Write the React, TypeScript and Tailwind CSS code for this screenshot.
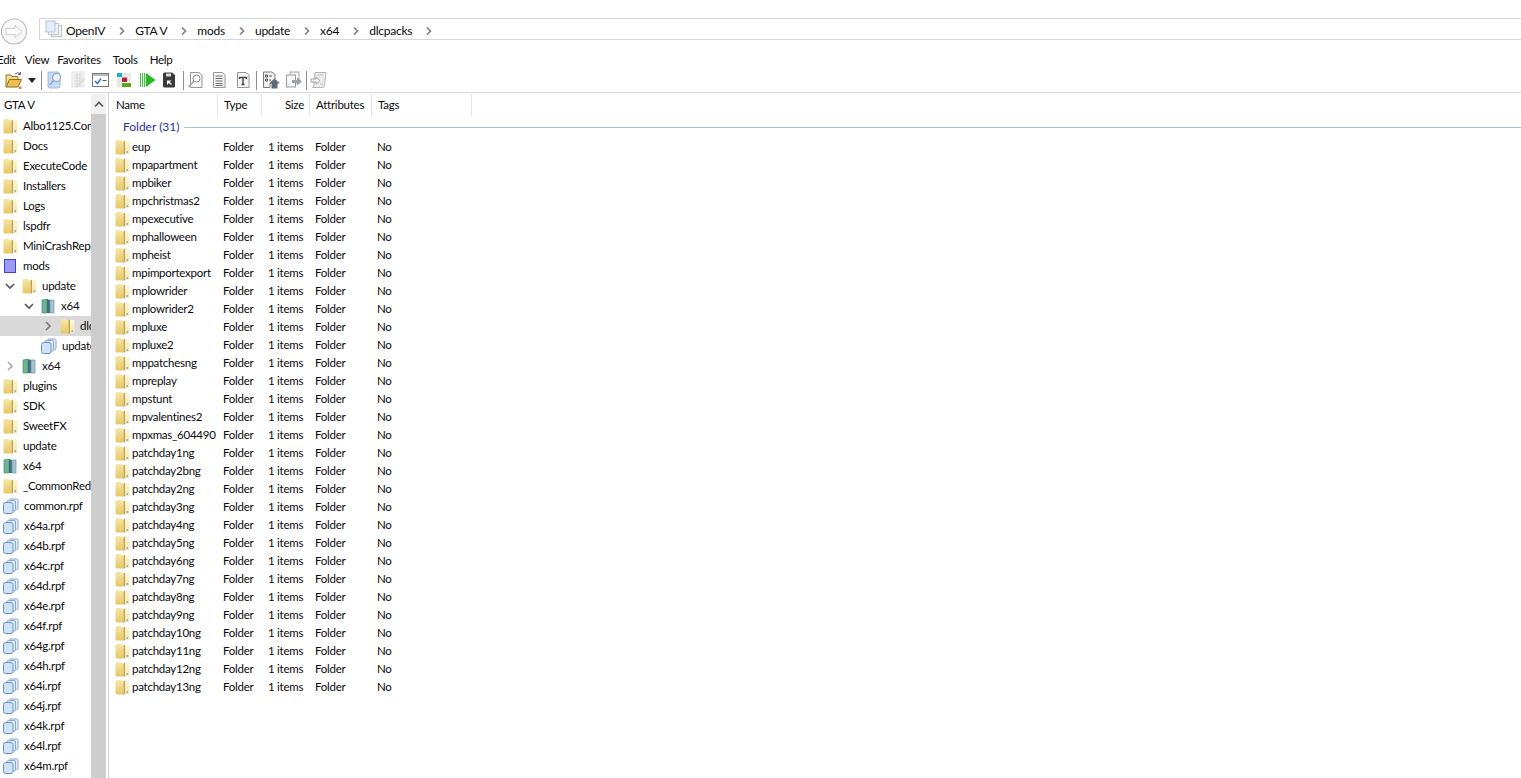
const FOLDERS = [
  "eup", "mpapartment", "mpbiker", "mpchristmas2", "mpexecutive", "mphalloween", "mpheist", "mpimportexport",
  "mplowrider", "mplowrider2", "mpluxe", "mpluxe2", "mppatchesng", "mpreplay", "mpstunt", "mpvalentines2",
  "mpxmas_604490", "patchday1ng", "patchday2bng", "patchday2ng", "patchday3ng", "patchday4ng", "patchday5ng",
  "patchday6ng", "patchday7ng", "patchday8ng", "patchday9ng", "patchday10ng", "patchday11ng", "patchday12ng",
  "patchday13ng",
];

type Kind = "folder" | "mods" | "pack" | "rpf";
type TreeRow = { label: string; kind: Kind; level?: 0 | 1 | 2 | 3; arrow?: "open" | "closed"; selected?: boolean };

const TREE: TreeRow[] = [
  { label: "Albo1125.Common", kind: "folder" },
  { label: "Docs", kind: "folder" },
  { label: "ExecuteCode", kind: "folder" },
  { label: "Installers", kind: "folder" },
  { label: "Logs", kind: "folder" },
  { label: "lspdfr", kind: "folder" },
  { label: "MiniCrashReports", kind: "folder" },
  { label: "mods", kind: "mods" },
  { label: "update", kind: "folder", level: 1, arrow: "open" },
  { label: "x64", kind: "pack", level: 2, arrow: "open" },
  { label: "dlcpacks", kind: "folder", level: 3, arrow: "closed", selected: true },
  { label: "update.rpf", kind: "rpf", level: 2 },
  { label: "x64", kind: "pack", level: 1, arrow: "closed" },
  { label: "plugins", kind: "folder" },
  { label: "SDK", kind: "folder" },
  { label: "SweetFX", kind: "folder" },
  { label: "update", kind: "folder" },
  { label: "x64", kind: "pack" },
  { label: "_CommonRedist", kind: "folder" },
  { label: "common.rpf", kind: "rpf" },
  { label: "x64a.rpf", kind: "rpf" },
  { label: "x64b.rpf", kind: "rpf" },
  { label: "x64c.rpf", kind: "rpf" },
  { label: "x64d.rpf", kind: "rpf" },
  { label: "x64e.rpf", kind: "rpf" },
  { label: "x64f.rpf", kind: "rpf" },
  { label: "x64g.rpf", kind: "rpf" },
  { label: "x64h.rpf", kind: "rpf" },
  { label: "x64i.rpf", kind: "rpf" },
  { label: "x64j.rpf", kind: "rpf" },
  { label: "x64k.rpf", kind: "rpf" },
  { label: "x64l.rpf", kind: "rpf" },
  { label: "x64m.rpf", kind: "rpf" },
];

const INDENT = { 0: "pl-[3px]", 1: "pl-[22px]", 2: "pl-[41px]", 3: "pl-[60px]" };
const CRUMBS = ["OpenIV", "GTA V", "mods", "update", "x64", "dlcpacks"];

function FolderIcon() {
  return (
    <svg width="15" height="16" viewBox="0 0 15 16" className="shrink-0">
      <defs>
        <linearGradient id="fl" x1="0" y1="0" x2="0" y2="1">
          <stop offset="0" stopColor="#f6e6a4" />
          <stop offset="1" stopColor="#e6c766" />
        </linearGradient>
        <linearGradient id="fr" x1="0" y1="0" x2="0" y2="1">
          <stop offset="0" stopColor="#fdf7d8" />
          <stop offset="1" stopColor="#f6e5a6" />
        </linearGradient>
      </defs>
      <path d="M.5 2.5 Q.5 1 2 1 L5 1 L8.5 2.5 L8.5 15.5 L2 15.5 Q.5 15.5 .5 14 Z" fill="url(#fl)" />
      <path d="M8.5 2.5 L10 1.5 L10 15.5 L8.5 15.5 Z" fill="#c4a24a" />
      <path d="M10 2 L13.5 2 Q14.5 2 14.5 3.5 L14.5 13.5 Q14.5 15 13 15 L10 15 Z" fill="url(#fr)" />
      <rect x="11.5" y="12" width="1.5" height="2" fill="#8ab8d8" />
    </svg>
  );
}

function ModsIcon() {
  return (
    <svg width="15" height="16" viewBox="0 0 15 16" className="shrink-0">
      <rect x="1.5" y="1.5" width="11" height="13" fill="#9b9bf2" stroke="#4040e0" />
    </svg>
  );
}

function PackIcon() {
  return (
    <svg width="15" height="16" viewBox="0 0 15 16" className="shrink-0">
      <path d="M1 2 L6 1 L6 15 L1 15 Z" fill="#6db595" stroke="#4a8d78" strokeWidth=".7" />
      <path d="M6 1 L9 2 L9 15 L6 15 Z" fill="#3f6e78" />
      <path d="M9 2 L13 2 L13 15 L9 15 Z" fill="#a3c2d2" stroke="#6f95a8" strokeWidth=".7" />
    </svg>
  );
}

function RpfIcon() {
  return (
    <svg width="16" height="16" viewBox="0 0 16 16" className="shrink-0">
      <rect x="6.5" y="1" width="8.5" height="10.5" rx="1.5" fill="#e6f0fb" stroke="#7fa5d6" />
      <rect x="4" y="2.5" width="8.5" height="10.5" rx="1.5" fill="#e6f0fb" stroke="#7fa5d6" />
      <rect x=".5" y="4.5" width="9.5" height="11" rx="2" fill="#cfe2f8" stroke="#5f90cc" />
    </svg>
  );
}

function RowIcon({ kind }: { kind: Kind }) {
  if (kind === "mods") return <ModsIcon />;
  if (kind === "pack") return <PackIcon />;
  if (kind === "rpf") return <RpfIcon />;
  return <FolderIcon />;
}

function Chevron({ open, light }: { open?: boolean; light?: boolean }) {
  const color = light ? "#a6a6a6" : "#7b7b7b";
  return (
    <svg width="10" height="10" viewBox="0 0 10 10">
      {open ? (
        <path d="M1 3 L5 7 L9 3" fill="none" stroke="#555" strokeWidth="1.6" />
      ) : (
        <path d="M3 1 L7 5 L3 9" fill="none" stroke={color} strokeWidth="1.6" />
      )}
    </svg>
  );
}

function BackButton() {
  return (
    <svg width="28" height="28" viewBox="0 0 28 28" className="shrink-0">
      <circle cx="14" cy="13.5" r="12.5" fill="#f8f8f8" stroke="#bdbdbd" strokeWidth="1.2" />
      <path d="M22 13.5 L15 7.5 L15 10.5 L6 10.5 L6 16.5 L15 16.5 L15 19.5 Z" fill="#fff" stroke="#c8c8c8" />
    </svg>
  );
}

function CrumbIcon() {
  return (
    <svg width="18" height="18" viewBox="0 0 18 18" className="shrink-0">
      <rect x="6.5" y="5.5" width="10" height="11" fill="#f5f5f5" stroke="#c0c0c0" />
      <rect x="3.5" y="3.5" width="10" height="11" fill="#f0f4f9" stroke="#bcc4cf" />
      <rect x="1" y="1" width="9" height="11" fill="#e4eefa" stroke="#b0c4dc" />
    </svg>
  );
}

/* toolbar drawings, 18x18 */
const OpenIcon = () => (
  <svg width="18" height="18" viewBox="0 0 18 18">
    <path d="M1 4 L6 4 L7 5.5 L13 5.5 L13 9 L1 16 Z" fill="#f4d98a" stroke="#9a7a2a" />
    <path d="M1 16 L4.5 8.5 L16.5 8.5 L13 16 Z" fill="#efc052" stroke="#8f6c20" />
    <path d="M10 3 Q13 .5 15.5 3 M15.5 1 L15.5 3.5 L13 3.5" fill="none" stroke="#556070" strokeWidth="1" />
    <rect x="14" y="15.5" width="2.5" height="2.5" fill="#f08020" />
  </svg>
);
const SearchBlueIcon = () => (
  <svg width="18" height="18" viewBox="0 0 18 18">
    <path d="M2 2 Q2 1 3 1 L12 1 L14 3 L14 15 Q14 17 12 17 L4 17 Q2 17 2 15 Z" fill="#c8daf3" stroke="#9ab8de" />
    <circle cx="10.5" cy="6.5" r="4" fill="#eef4fc" stroke="#8da6c6" strokeWidth="1.2" />
    <path d="M7.5 9.5 L3.5 14" stroke="#8da6c6" strokeWidth="1.8" />
  </svg>
);
const FadedDocIcon = () => (
  <svg width="18" height="18" viewBox="0 0 18 18">
    <rect x="3" y="1" width="12" height="15" fill="#f2f2f2" stroke="#e4e4e4" />
    <path d="M5 4h8M5 7h8M5 10h8M5 13h5M8 2v14M11 2v14" stroke="#d8d8d8" />
    <path d="M7 16 L15 8" stroke="#dcdcdc" strokeWidth="2" />
  </svg>
);
const CheckWindowIcon = () => (
  <svg width="18" height="18" viewBox="0 0 18 18">
    <rect x=".5" y="2.5" width="16" height="13" fill="#fff" stroke="#777" />
    <rect x="1" y="3" width="15" height="2" fill="#b8b8b8" />
    <path d="M3 10 L5.5 12.5 L9 7.5" fill="none" stroke="#2f74d0" strokeWidth="1.5" />
    <path d="M10.5 9.5h4" stroke="#555" />
  </svg>
);
const BlocksIcon = () => (
  <svg width="16" height="16" viewBox="0 0 16 16">
    <rect x="1" y="1" width="5" height="4" fill="#10b0d8" />
    <rect x="6" y="1" width="9" height="4" fill="#e8e8e8" />
    <rect x="1" y="5" width="5" height="5" fill="#e8e8e8" />
    <rect x="6" y="5.5" width="5" height="4.5" fill="#c01838" />
    <rect x="11" y="5.5" width="4" height="4.5" fill="#e8e8e8" />
    <rect x="1" y="10" width="5" height="5" fill="#e8e8e8" />
    <rect x="6" y="11" width="9" height="4" fill="#58a818" />
  </svg>
);
const RunIcon = () => (
  <svg width="16" height="16" viewBox="0 0 16 16">
    <path d="M.5 1v14M2.5 1v14M4.5 1v14" stroke="#3cc83c" />
    <path d="M6 1 L15.5 8 L6 15 Z" fill="#25b825" />
  </svg>
);
const SaveDarkIcon = () => (
  <svg width="14" height="16" viewBox="0 0 14 16">
    <path d="M1 2 Q1 .5 2.5 .5 L10 .5 L13 3 L13 14 Q13 15.5 11.5 15.5 L2.5 15.5 Q1 15.5 1 14 Z" fill="#3a3a3a" />
    <rect x="4" y="1.5" width="5" height="3" fill="#d8d8d8" />
    <path d="M5 13 L5 8.5 L9.5 8.5 L7.8 10 L10 12 L9 13 L7 11 Z" fill="#fff" />
  </svg>
);
const DocFrame = ({ children }: { children?: React.ReactNode }) => (
  <svg width="18" height="18" viewBox="0 0 18 18">
    <path d="M3.5 1.5 L12 1.5 L15 4 L15 16.5 L3.5 16.5 Z" fill="#f6f6f6" stroke="#969696" />
    {children}
  </svg>
);
const ZoomDocIcon = () => (
  <DocFrame>
    <circle cx="9.5" cy="7.5" r="3.5" fill="#fff" stroke="#8a8a8a" />
    <path d="M7 10 L1.5 16" stroke="#a4a4a4" strokeWidth="1.6" />
  </DocFrame>
);
const TextDocIcon = () => (
  <DocFrame>
    <path d="M5.5 5h7M5.5 7.5h7M5.5 10h7M5.5 12.5h7M5.5 14.5h7" stroke="#6a6a6a" />
  </DocFrame>
);
const TypeDocIcon = () => (
  <DocFrame>
    <path d="M5.5 8 L5.5 6.5 L12.5 6.5 L12.5 8 M9 6.5 L9 13.5 M7.5 13.5 L10.5 13.5" fill="none" stroke="#444" strokeWidth="1.4" />
  </DocFrame>
);
const ImportIcon = () => (
  <svg width="18" height="18" viewBox="0 0 18 18">
    <path d="M1.5 1 L10 1 L13 3.5 L13 8 L8 13 L8 16.5 L1.5 16.5 Z" fill="#f0f0f0" stroke="#7a7a7a" />
    <path d="M3.5 4h2v2h-2zM3.5 8h2v2h-2zM7 5h3M7 9h2" stroke="#555" fill="none" />
    <path d="M12.5 7.5 L18 12.5 L15.5 12.5 L15.5 17.5 L9.5 17.5 L9.5 12.5 L7 12.5 Z" fill="#5d6b78" />
  </svg>
);
const ExportIcon = () => (
  <svg width="18" height="18" viewBox="0 0 18 18">
    <rect x="5" y="1" width="9" height="11" fill="#f6f6f6" stroke="#a8a8a8" />
    <rect x="1.5" y="4" width="9" height="12" fill="#f6f6f6" stroke="#9a9a9a" />
    <path d="M7 9h5V6.5L17 10.5 12 14.5V12H7Z" fill="#9aa2aa" />
  </svg>
);
const ScriptIcon = () => (
  <svg width="18" height="18" viewBox="0 0 18 18">
    <path d="M5 1.5 L16 1.5 L14.5 14 Q14 16.5 12 16.5 L2.5 16.5 Q4 15.5 4 13 Z" fill="#ececec" stroke="#b4b4b4" />
    <path d="M1 8h5V6l4 3.5L6 13v-2H1Z" fill="#f6f6f6" stroke="#a4a4a4" />
    <path d="M8 4h5M10 13h3" stroke="#bcbcbc" />
  </svg>
);

function Sep({ className }: { className: string }) {
  return <div className={`h-[19px] w-px bg-[#8e8e8e] shrink-0 ${className}`} />;
}

function Tool({ className, children }: { className: string; children: React.ReactNode }) {
  return <div className={`flex h-[18px] items-center justify-center shrink-0 ${className}`}>{children}</div>;
}

export default function App() {
  return (
    <div className="h-[778px] w-[1521px] overflow-hidden bg-white text-[11.5px] tracking-[-0.25px] leading-[16px] text-[#0a0a0a] flex flex-col font-['Lato','Noto_Sans',sans-serif]">
      {/* address bar */}
      <div className="flex items-start h-[46px] pt-[18px] shrink-0">
        <div className="w-[39px] shrink-0"><BackButton /></div>
        <div className="flex-1 h-[22px] border border-r-0 border-[#d6d6d6] flex items-center pl-[5px]">
          <CrumbIcon />
          <div className="flex items-center ml-[3px] pt-[3px]">
            {CRUMBS.map((c) => (
              <div key={c} className="flex items-center">
                <span className="text-[12px]">{c}</span>
                <svg width="6" height="8" viewBox="0 0 6 8" className="ml-[14px] mr-[10px]">
                  <path d="M1 .5 L4.5 4 L1 7.5" fill="none" stroke="#808080" strokeWidth="1.6" />
                </svg>
              </div>
            ))}
          </div>
        </div>
      </div>

      {/* menu */}
      <div className="flex h-[23px] items-end shrink-0 -ml-[3px] pb-[1px]">
        <span className="mr-[9px]">Edit</span>
        <span className="mr-[8px]">View</span>
        <span className="mr-[12px]">Favorites</span>
        <span className="mr-[12px]">Tools</span>
        <span>Help</span>
      </div>

      {/* toolbar */}
      <div className="flex h-[24px] items-center shrink-0 border-b border-[#d9d9d9] pl-[5px] pb-[1px]">
        <Tool className="w-[18px]"><OpenIcon /></Tool>
        <svg width="8" height="5" viewBox="0 0 8 5" className="ml-[5px]"><path d="M0 0 H8 L4 5 Z" fill="#222" /></svg>
        <Sep className="ml-[5px]" />
        <Tool className="ml-[4px] w-[18px]"><SearchBlueIcon /></Tool>
        <Tool className="ml-[5px] w-[18px]"><FadedDocIcon /></Tool>
        <Tool className="ml-[5px] w-[18px]"><CheckWindowIcon /></Tool>
        <Tool className="ml-[6px] w-[16px]"><BlocksIcon /></Tool>
        <Tool className="ml-[8px] w-[16px]"><RunIcon /></Tool>
        <Tool className="ml-[6px] w-[14px]"><SaveDarkIcon /></Tool>
        <Sep className="ml-[7px]" />
        <Tool className="ml-[3px] w-[18px]"><ZoomDocIcon /></Tool>
        <Tool className="ml-[5px] w-[18px]"><TextDocIcon /></Tool>
        <Tool className="ml-[6px] w-[18px]"><TypeDocIcon /></Tool>
        <Sep className="ml-[4px]" />
        <Tool className="ml-[5px] w-[18px]"><ImportIcon /></Tool>
        <Tool className="ml-[5px] w-[18px]"><ExportIcon /></Tool>
        <Sep className="ml-[3px]" />
        <Tool className="ml-[3px] w-[18px]"><ScriptIcon /></Tool>
      </div>

      <div className="flex flex-1 min-h-0">
        {/* tree */}
        <div className="w-[109px] shrink-0 flex border-r border-[#d0d0d0]">
          <div className="w-[91px] shrink-0 overflow-hidden">
            <div className="h-[23px] pl-[4px] pt-[1px] flex items-center">GTA V</div>
            {TREE.map((row, i) => (
              <div
                key={i}
                className={`h-[20px] flex items-center whitespace-nowrap ${INDENT[row.level ?? 0]} ${row.selected ? "bg-[#d9d9d9]" : ""}`}
              >
                {row.arrow && (
                  <span className="-ml-[17px] w-[17px] shrink-0 flex">
                    <Chevron open={row.arrow === "open"} light={!row.selected} />
                  </span>
                )}
                <RowIcon kind={row.kind} />
                <span className="ml-[5px]">{row.label}</span>
              </div>
            ))}
          </div>
          <div className="w-[15px] shrink-0 bg-[#cdcdcd] mt-[1px]">
            <div className="h-[20px] bg-[#f0f0f0] flex items-center justify-center">
              <svg width="10" height="7" viewBox="0 0 10 7"><path d="M1 5.5 L5 1.5 L9 5.5" fill="none" stroke="#555" strokeWidth="1.6" /></svg>
            </div>
          </div>
        </div>

        {/* list */}
        <div className="flex-1 min-w-0">
          <div className="flex h-[23px] pt-[1px]">
            <div className="w-[109px] pl-[7px] pt-[3px] border-r border-[#e5e5e5]">Name</div>
            <div className="w-[44px] pl-[6px] pt-[3px] border-r border-[#e5e5e5]">Type</div>
            <div className="w-[48px] pr-[5px] pt-[3px] text-right border-r border-[#e5e5e5]">Size</div>
            <div className="w-[62px] pl-[6px] pt-[3px] border-r border-[#e5e5e5]">Attributes</div>
            <div className="w-[100px] pl-[6px] pt-[3px] border-r border-[#e5e5e5]">Tags</div>
          </div>
          <div className="flex h-[22px] items-center pl-[14px]">
            <span className="text-[12px] tracking-normal text-[#1f2f9f] whitespace-nowrap">Folder (31)</span>
            <div className="ml-[5px] flex-1 h-px bg-[#a9bbdf]" />
          </div>
          {FOLDERS.map((name) => (
            <div key={name} className="flex h-[18px] items-center whitespace-nowrap">
              <div className="w-[109px] pl-[6px] flex items-center">
                <FolderIcon />
                <span className="ml-[2px]">{name}</span>
              </div>
              <div className="w-[44px] pl-[5px]">Folder</div>
              <div className="w-[48px] pl-[6px]">1 items</div>
              <div className="w-[62px] pl-[5px]">Folder</div>
              <div className="pl-[5px]">No</div>
            </div>
          ))}
        </div>
      </div>
    </div>
  );
}
